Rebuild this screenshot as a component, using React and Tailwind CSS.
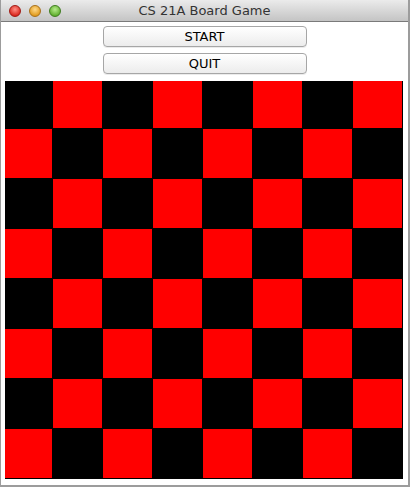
import React from 'react';

const Light = ({ from, to, ring }) => (
  <span
    className="block w-[12px] h-[12px] rounded-full border"
    style={{ background: `radial-gradient(circle at 50% 35%, ${from}, ${to} 75%)`, borderColor: ring }}
  />
);

const MacButton = ({ children }) => (
  <button className="w-[204px] h-[21px] rounded-[4px] border border-[#a6a6a6] bg-gradient-to-b from-white to-[#ececec] shadow-[0_1px_0_rgba(0,0,0,0.08)] text-[13px] leading-none text-black [font-family:'DejaVu_Sans',sans-serif]">
    {children}
  </button>
);

export default function App() {
  const squares = [];
  for (let r = 0; r < 8; r++) {
    for (let c = 0; c < 8; c++) {
      squares.push((r + c) % 2 === 1);
    }
  }

  return (
    <div className="w-[410px] h-[487px] bg-[#9c9c9c] pl-[1px] overflow-hidden">
      <div className="w-[407px] h-[485px] bg-white flex flex-col">
        {/* Title bar */}
        <div className="relative h-[22px] shrink-0 bg-gradient-to-b from-[#ebebeb] to-[#c4c4c4] border-b border-[#7a7a7a] flex items-center">
          <div className="flex gap-[8px] pl-[8px]">
            <Light from="#ff8f85" to="#d9261c" ring="#a11a14" />
            <Light from="#ffd98a" to="#e09a1c" ring="#a8701a" />
            <Light from="#b7ec8c" to="#5fae2d" ring="#3f7d1f" />
          </div>
          <div className="absolute inset-0 flex items-center justify-center text-[13px] text-[#333] [font-family:'DejaVu_Sans',sans-serif]">
            CS 21A Board Game
          </div>
        </div>

        {/* Buttons */}
        <div className="flex flex-col items-center gap-[6px] pt-[4px]">
          <MacButton>START</MacButton>
          <MacButton>QUIT</MacButton>
        </div>

        {/* Board: 50px cells, clipped to the panel */}
        <div className="ml-[4px] mt-[7px] w-[398px] h-[398px] bg-black overflow-hidden">
          <div className="-ml-[2px] -mt-[2px] w-[400px] h-[400px] grid grid-cols-[repeat(8,50px)] grid-rows-[repeat(8,50px)]">
            {squares.map((red, i) => (
              <div key={i} className={red ? 'bg-[#ff0000] w-[49px] h-[49px]' : ''} />
            ))}
          </div>
        </div>
      </div>
    </div>
  );
}
